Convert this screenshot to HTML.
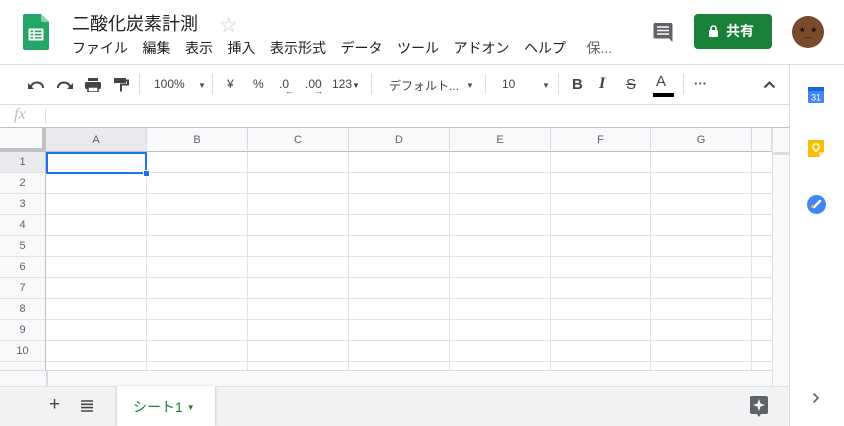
<!DOCTYPE html>
<html><head><meta charset="utf-8"><style>
*{margin:0;padding:0;box-sizing:border-box}
body{width:844px;height:426px;overflow:hidden;background:#fff;font-family:"Liberation Sans","Noto Sans CJK JP",sans-serif;position:relative;color:#202124}
.a{position:absolute}
.menu span{margin-right:14.5px}
.tb{color:#444;font-size:12px}
.sep{position:absolute;top:74px;width:1px;height:20px;background:#dadce0}
.ch{position:absolute;top:128px;height:24px;border-right:1px solid #dadce0;font-size:11px;color:#5f6368;text-align:center;line-height:24px;background:#f8f9fa;border-bottom:1px solid #c0c0c0}
.rh{position:absolute;left:0;width:46px;height:21px;font-size:11px;color:#5f6368;text-align:center;line-height:21px;background:#f8f9fa;border-right:1px solid #c0c0c0;border-bottom:1px solid #e2e2e2}
.dd{position:absolute;top:81px;font-size:8px;color:#555}
</style></head><body>
<svg class="a" style="left:23px;top:14px" width="26" height="36" viewBox="0 0 26 36"><path d="M2 0h16l8 8v26a2 2 0 0 1-2 2H2a2 2 0 0 1-2-2V2a2 2 0 0 1 2-2z" fill="#23a566"/><path d="M18 0l8 8h-6a2 2 0 0 1-2-2z" fill="#8ed1b1"/><path d="M6.5 15.5h13v10h-13z" fill="none" stroke="#fff" stroke-width="2"/><path d="M6.5 19h13M6.5 22.3h13M11 15.5v10" stroke="#fff" stroke-width="1.6"/></svg>
<div class="a" style="left:72px;top:10px;font-size:18px;color:#202124">二酸化炭素計測</div>
<div class="a" style="left:220px;top:11px;font-size:17px;color:#d0d0d0">☆</div>
<div class="a menu" style="left:72px;top:38px;font-size:14px;color:#202124;white-space:nowrap"><span>ファイル</span><span>編集</span><span>表示</span><span>挿入</span><span>表示形式</span><span>データ</span><span>ツール</span><span>アドオン</span><span>ヘルプ</span><span style="color:#666;margin-left:6px">保...</span></div>
<svg class="a" style="left:653px;top:22px" width="21" height="21" viewBox="0 0 21 21"><path d="M2 1h16a1.5 1.5 0 0 1 1.5 1.5V20L16 16.5H2A1.5 1.5 0 0 1 .5 15V2.5A1.5 1.5 0 0 1 2 1z" fill="#5f6368"/><path d="M4 5h12M4 8.5h12M4 12h12" stroke="#fff" stroke-width="1.6"/></svg>
<div class="a" style="left:694px;top:14px;width:78px;height:35px;background:#188038;border-radius:4px;color:#fff;font-size:14px;font-weight:bold;line-height:35px;padding-left:32px">共有</div>
<svg class="a" style="left:708px;top:25px" width="11" height="12" viewBox="0 0 11 12"><rect x="1" y="5" width="9" height="7" rx="1" fill="#fff"/><path d="M3 5V3.5a2.5 2.5 0 0 1 5 0V5" stroke="#fff" stroke-width="1.6" fill="none"/></svg>
<div class="a" style="left:792px;top:16px;width:32px;height:32px;border-radius:50%;background:#7a4a2c;color:#111;font-size:12px;font-weight:bold;text-align:center;line-height:32px">*_*</div>
<div class="a" style="left:0;top:64px;width:844px;height:1px;background:#dadce0"></div>
<div class="a" style="left:789px;top:64px;width:1px;height:362px;background:#dadce0"></div>
<svg class="a" style="left:28px;top:78px" width="110" height="14" viewBox="0 0 110 14"><path d="M3 9a6 5 0 0 1 12 1" stroke="#444" stroke-width="2" fill="none"/><path d="M0 5v6h6z" fill="#444"/><path d="M42 9a6 5 0 0 0-12 1" stroke="#444" stroke-width="2" fill="none"/><path d="M45 5v6h-6z" fill="#444"/><rect x="57" y="4" width="16" height="7" rx="1.5" fill="#444"/><rect x="60" y="0" width="10" height="3" fill="#444"/><rect x="60" y="9" width="10" height="5" fill="#fff" stroke="#444" stroke-width="1.5"/><rect x="86" y="0" width="12" height="5" fill="#444"/><path d="M98 2.5h2v4h-7v7" stroke="#444" stroke-width="2" fill="none"/></svg>
<div class="sep" style="left:139px"></div>
<div class="a tb" style="left:154px;top:77px">100%</div><div class="dd" style="left:198px">▼</div>
<div class="sep" style="left:212px"></div>
<div class="a tb" style="left:227px;top:77px">¥</div>
<div class="a tb" style="left:253px;top:77px">%</div>
<div class="a tb" style="left:279px;top:77px">.0<span style="position:absolute;left:6px;top:9px;font-size:9px">←</span></div>
<div class="a tb" style="left:305px;top:77px">.00<span style="position:absolute;left:9px;top:9px;font-size:9px">→</span></div>
<div class="a tb" style="left:332px;top:77px">123<span style="font-size:8px">▼</span></div>
<div class="sep" style="left:371px"></div>
<div class="a tb" style="left:389px;top:77px">デフォルト...</div><div class="dd" style="left:466px">▼</div>
<div class="sep" style="left:485px"></div>
<div class="a tb" style="left:502px;top:77px">10</div><div class="dd" style="left:542px">▼</div>
<div class="sep" style="left:558px"></div>
<div class="a" style="left:572px;top:76px;font-size:15px;font-weight:bold;color:#444">B</div>
<div class="a" style="left:599px;top:75px;font-size:16px;font-style:italic;font-family:'Liberation Serif',serif;font-weight:bold;color:#444">I</div>
<div class="a" style="left:626px;top:76px;font-size:15px;color:#444;text-decoration:line-through">S</div>
<div class="a" style="left:656px;top:73px;font-size:15px;color:#444">A</div>
<div class="a" style="left:653px;top:93px;width:21px;height:4px;background:#000"></div>
<div class="sep" style="left:683px"></div>
<div class="a" style="left:694px;top:76px;font-size:13px;color:#444;font-weight:bold">···</div>
<svg class="a" style="left:763px;top:80px" width="13" height="9" viewBox="0 0 13 9"><path d="M1.5 7.5l5-5 5 5" stroke="#444" stroke-width="2" fill="none"/></svg>
<div class="a" style="left:0;top:104px;width:789px;height:1px;background:#dadce0"></div>
<div class="a" style="left:14px;top:106px;font-size:16px;font-style:italic;color:#bbb;font-family:'Liberation Serif',serif">fx</div>
<div class="a" style="left:45px;top:108px;width:1px;height:16px;background:#dadce0"></div>
<div class="a" style="left:0;top:127px;width:789px;height:1px;background:#c0c0c0"></div>
<div class="a" style="left:0;top:128px;width:46px;height:24px;background:#f8f9fa;border-right:4px solid #c0c0c0;border-bottom:4px solid #c0c0c0"></div>
<div class="ch" style="left:46px;width:101px;background:#e8eaed">A</div>
<div class="ch" style="left:147px;width:101px">B</div>
<div class="ch" style="left:248px;width:101px">C</div>
<div class="ch" style="left:349px;width:101px">D</div>
<div class="ch" style="left:450px;width:101px">E</div>
<div class="ch" style="left:551px;width:100px">F</div>
<div class="ch" style="left:651px;width:101px">G</div>
<div class="ch" style="left:752px;width:20px"></div>
<svg class="a" style="left:46px;top:152px" width="726" height="218">
<g stroke="#e2e2e2" stroke-width="1">
<path d="M0 20.5H726M0 41.5H726M0 62.5H726M0 83.5H726M0 104.5H726M0 125.5H726M0 146.5H726M0 167.5H726M0 188.5H726M0 209.5H726"/>
<path d="M100.5 0V218M201.5 0V218M302.5 0V218M403.5 0V218M504.5 0V218M604.5 0V218M705.5 0V218"/>
</g></svg>
<div class="rh" style="top:152px;background:#e8eaed">1</div>
<div class="rh" style="top:173px">2</div>
<div class="rh" style="top:194px">3</div>
<div class="rh" style="top:215px">4</div>
<div class="rh" style="top:236px">5</div>
<div class="rh" style="top:257px">6</div>
<div class="rh" style="top:278px">7</div>
<div class="rh" style="top:299px">8</div>
<div class="rh" style="top:320px">9</div>
<div class="rh" style="top:341px">10</div>
<div class="rh" style="top:362px;height:8px;border-bottom:none"></div>
<div class="a" style="left:46px;top:152px;width:101px;height:22px;border:2px solid #1a73e8"></div>
<div class="a" style="left:143px;top:170px;width:7px;height:7px;background:#1a73e8;border:1px solid #fff"></div>
<div class="a" style="left:772px;top:128px;width:17px;height:258px;background:#f8f9fa;border-left:1px solid #e2e2e2"></div>
<div class="a" style="left:772px;top:152px;width:17px;height:3px;background:#dadce0"></div>
<div class="a" style="left:0;top:370px;width:772px;height:16px;background:#f8f9fa;border-top:1px solid #dadce0"></div>
<div class="a" style="left:46px;top:370px;width:2px;height:16px;background:#dadce0"></div>
<div class="a" style="left:0;top:386px;width:789px;height:40px;background:#f1f3f4;border-top:1px solid #e2e2e2"></div>
<div class="a" style="left:49px;top:394px;font-size:19px;color:#444">+</div>
<svg class="a" style="left:81px;top:400px" width="12" height="12" viewBox="0 0 12 12"><path d="M0 1h12M0 4.3h12M0 7.6h12M0 11h12" stroke="#444" stroke-width="1.6"/></svg>
<div class="a" style="left:117px;top:386px;width:98px;height:40px;background:#fff;box-shadow:0 1px 3px rgba(0,0,0,.25)"></div>
<div class="a" style="left:133px;top:397px;font-size:14px;color:#188038">シート1 <span style="font-size:8px;vertical-align:2px">▼</span></div>
<svg class="a" style="left:750px;top:396px" width="18" height="21" viewBox="0 0 18 21"><path d="M2 0h14a2 2 0 0 1 2 2v14a2 2 0 0 1-2 2h-5l-2 3-2-3H2a2 2 0 0 1-2-2V2a2 2 0 0 1 2-2z" fill="#5f6368"/><path d="M9 3l1.5 4.5L15 9l-4.5 1.5L9 15l-1.5-4.5L3 9l4.5-1.5z" fill="#fff"/></svg>
<svg class="a" style="left:808px;top:85px" width="16" height="18" viewBox="0 0 16 18"><rect x="0" y="2" width="16" height="16" rx="1" fill="#4285f4"/><rect x="0" y="2" width="16" height="4" fill="#1967d2"/><text x="8" y="15.5" font-size="9" fill="#fff" text-anchor="middle" font-family="Liberation Sans">31</text></svg>
<svg class="a" style="left:808px;top:140px" width="16" height="18" viewBox="0 0 16 18"><path d="M1 0h14a1 1 0 0 1 1 1v11l-5 5H1a1 1 0 0 1-1-1V1a1 1 0 0 1 1-1z" fill="#fbbc04"/><path d="M16 12h-4a1 1 0 0 0-1 1v4z" fill="#fde293"/><circle cx="8" cy="7" r="3.2" fill="none" stroke="#fff" stroke-width="1.3"/><path d="M6.5 11h3" stroke="#fff" stroke-width="1.3"/></svg>
<svg class="a" style="left:807px;top:195px" width="19" height="19" viewBox="0 0 19 19"><circle cx="9.5" cy="9.5" r="9.5" fill="#4285f4"/><path d="M7 12l6-6" stroke="#fff" stroke-width="2.4" stroke-linecap="round"/><circle cx="5.5" cy="11.5" r="1.5" fill="#fbbc04"/></svg>
<svg class="a" style="left:812px;top:392px" width="8" height="12" viewBox="0 0 8 12"><path d="M1.5 1.5l4.5 4.5-4.5 4.5" stroke="#5f6368" stroke-width="1.6" fill="none"/></svg>
</body></html>
